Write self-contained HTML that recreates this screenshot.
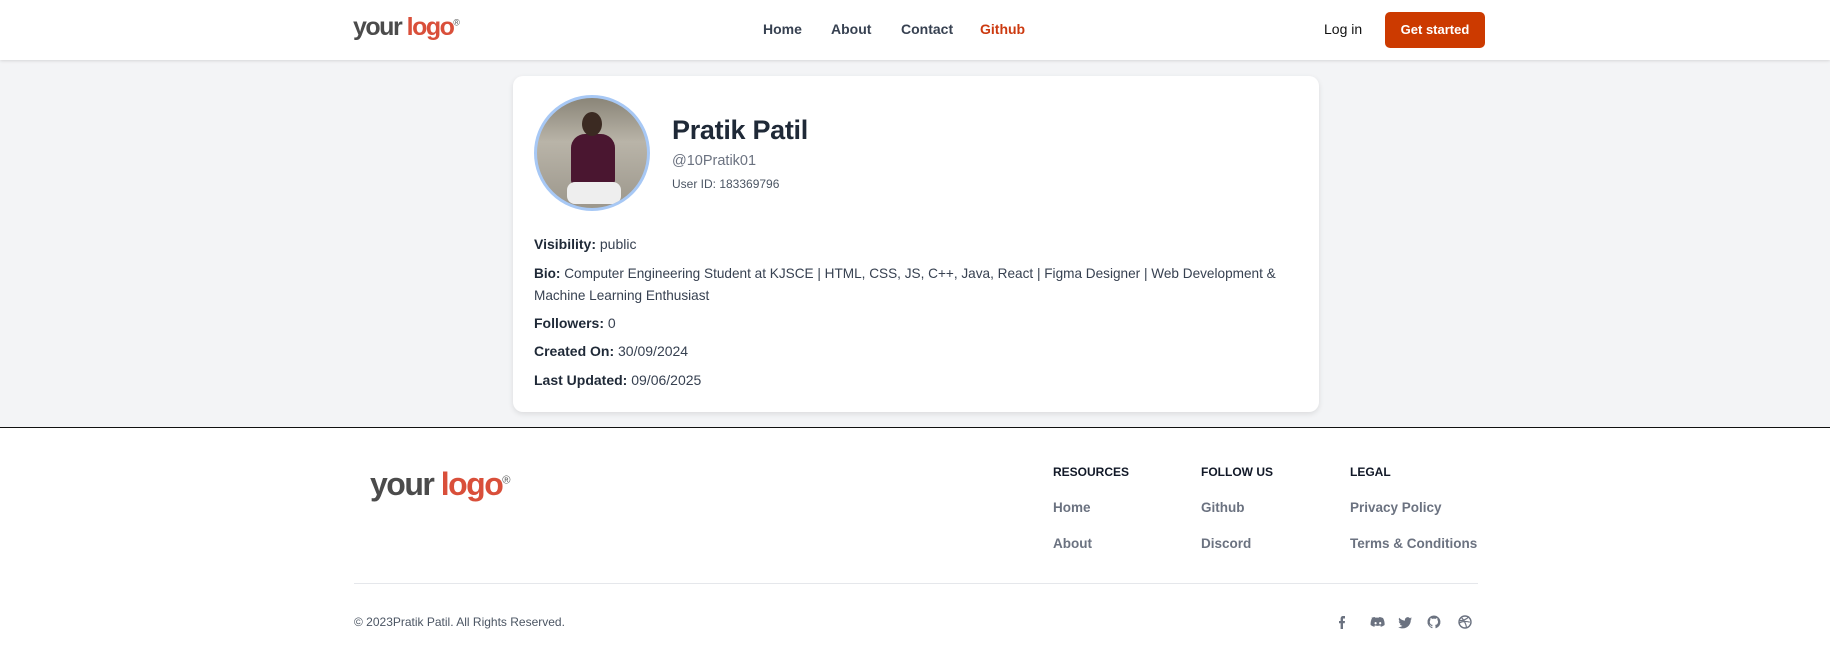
<!DOCTYPE html>
<html><head><meta charset="utf-8"><style>
*{margin:0;padding:0;box-sizing:border-box}
body{width:1830px;height:657px;background:#f3f4f6;font-family:"Liberation Sans",sans-serif;position:relative;overflow:hidden;color:#1f2937}
.a{position:absolute;white-space:nowrap}
header{position:absolute;left:0;top:0;width:1830px;height:60px;background:#fff;box-shadow:0 1px 3px rgba(0,0,0,.12)}
.logo{font-weight:bold;letter-spacing:-1.5px}
.logo .y{color:#4b4b4b}.logo .l{color:#d94f3a}
.logo sup{font-size:.35em;color:#555;font-weight:normal}
.nav{font-size:14px;font-weight:bold;color:#374151;top:21px}
.card{position:absolute;left:513px;top:76px;width:806px;height:336px;background:#fff;border-radius:10px;box-shadow:0 2px 6px rgba(0,0,0,.1)}
.row{font-size:14px;color:#374151}
.row b{color:#1f2937}
footer{position:absolute;left:0;top:427px;width:1830px;height:230px;background:#fff;border-top:1.5px solid #111}
.h{font-size:12px;font-weight:bold;color:#111827;top:37px}
.lk{font-size:13.5px;color:#6b7280;font-weight:bold}
</style></head><body>
<header>
<div class="a logo" style="left:353px;top:13px;font-size:25px"><span class="y">your</span> <span class="l">logo</span><sup>®</sup></div>
<div class="a nav" style="left:763px">Home</div>
<div class="a nav" style="left:831px">About</div>
<div class="a nav" style="left:901px">Contact</div>
<div class="a nav" style="left:980px;color:#cc3a10">Github</div>
<div class="a nav" style="left:1324px;color:#111;font-weight:normal">Log in</div>
<div class="a" style="left:1385px;top:12px;width:100px;height:36px;background:#cc3a00;border-radius:5px;color:#fff;font-size:13px;font-weight:bold;text-align:center;line-height:36px">Get started</div>
</header>
<div class="card">
<div class="a" style="left:21px;top:19px;width:116px;height:116px;border-radius:50%;border:3px solid #a7c8f5;overflow:hidden;background:linear-gradient(#8a8578,#b9b4a8 40%,#9c978c)">
<div class="a" style="left:34px;top:36px;width:44px;height:52px;background:#4a1630;border-radius:14px 14px 6px 6px"></div>
<div class="a" style="left:45px;top:14px;width:20px;height:24px;background:#3b2a22;border-radius:50%"></div>
<div class="a" style="left:30px;top:84px;width:54px;height:22px;background:#eee;border-radius:8px"></div>
</div>
<div class="a" style="left:159px;top:39px;font-size:27px;font-weight:bold;color:#1f2937;letter-spacing:-.3px">Pratik Patil</div>
<div class="a" style="left:159px;top:77px;font-size:14.5px;color:#6b7280">@10Pratik01</div>
<div class="a" style="left:159px;top:101px;font-size:12px;color:#4b5563">User ID: 183369796</div>
<div class="a row" style="left:21px;top:160px"><b>Visibility:</b> public</div>
<div class="a row" style="left:21px;top:187px;line-height:22px;white-space:normal;width:770px;font-size:13.6px"><b>Bio:</b> Computer Engineering Student at KJSCE | HTML, CSS, JS, C++, Java, React | Figma Designer | Web Development &amp; Machine Learning Enthusiast</div>
<div class="a row" style="left:21px;top:239px"><b>Followers:</b> 0</div>
<div class="a row" style="left:21px;top:267px"><b>Created On:</b> 30/09/2024</div>
<div class="a row" style="left:21px;top:296px"><b>Last Updated:</b> 09/06/2025</div>
</div>
<footer>
<div class="a logo" style="left:370px;top:38px;font-size:32px"><span class="y">your</span> <span class="l">logo</span><sup>®</sup></div>
<div class="a h" style="left:1053px">RESOURCES</div>
<div class="a h" style="left:1201px">FOLLOW US</div>
<div class="a h" style="left:1350px">LEGAL</div>
<div class="a lk" style="left:1053px;top:72px">Home</div>
<div class="a lk" style="left:1053px;top:108px">About</div>
<div class="a lk" style="left:1201px;top:72px">Github</div>
<div class="a lk" style="left:1201px;top:108px">Discord</div>
<div class="a lk" style="left:1350px;top:72px">Privacy Policy</div>
<div class="a lk" style="left:1350px;top:108px">Terms &amp; Conditions</div>
<div class="a" style="left:354px;top:155px;width:1124px;height:1px;background:#e5e7eb"></div>
<div class="a" style="left:354px;top:187px;font-size:12px;color:#4b5563">© 2023Pratik Patil. All Rights Reserved.</div>
<svg class="a" style="left:1334px;top:186px" width="145" height="16" viewBox="0 0 145 16" fill="#6b7280">
<path d="M9 2h2v2.5H9.5c-.5 0-.5.3-.5.8V7h2l-.3 2.3H9V15H6.6V9.3H5V7h1.6V5C6.6 3 7.5 2 9 2z"/>
<path d="M37 4c1.5-.7 3-.9 4-.9l.4.7c1-.2 2.2-.2 3.2 0l.4-.7c1 0 2.5.2 4 .9 1.2 2 1.8 4.5 1.6 7-1.3 1-2.6 1.5-3.700 1.8l-.7-1.1c.6-.2 1-.4 1.4-.7-2.5 1.1-5.5 1.1-8 0 .4.3.8.5 1.4.7l-.7 1.1c-1.1-.3-2.4-.8-3.7-1.8-.2-2.5.4-5 1.4-7zm3.5 5.2a1.1 1.2 0 1 0 2.2 0 1.1 1.2 0 1 0-2.2 0zm4.6 0a1.1 1.2 0 1 0 2.2 0 1.1 1.2 0 1 0-2.2 0z"/>
<path d="M78 4.5c-.5.2-1 .4-1.6.4.6-.3 1-.9 1.2-1.5-.5.3-1.1.6-1.8.7a2.8 2.8 0 0 0-4.8 2.5c-2.3-.1-4.4-1.2-5.8-2.9-.8 1.3-.3 2.9.9 3.7-.5 0-.9-.1-1.3-.3 0 1.4 1 2.6 2.3 2.8-.4.1-.9.1-1.3 0 .4 1.1 1.4 1.9 2.6 2-1.2.9-2.7 1.4-4.2 1.2 1.3.8 2.8 1.3 4.4 1.3 5.4 0 8.4-4.6 8.2-8.7.5-.4 1-.8 1.2-1.200z"/>
<path d="M100 1.5a6.5 6.5 0 0 0-2 12.7c.3 0 .4-.1.4-.3v-1.2c-1.8.4-2.2-.8-2.2-.8-.3-.7-.7-.9-.7-.9-.6-.4 0-.4 0-.4.6 0 1 .7 1 .7.6 1 1.5.7 1.9.5 0-.4.2-.7.4-.9-1.4-.2-3-.7-3-3.2 0-.7.3-1.3.7-1.8-.1-.2-.3-.8 0-1.7 0 0 .6-.2 1.8.7a6 6 0 0 1 3.2 0c1.2-.9 1.8-.7 1.8-.7.3.9.1 1.5 0 1.7.4.5.7 1.1.7 1.8 0 2.5-1.5 3-3 3.2.3.2.5.6.5 1.2v1.8c0 .2.1.3.4.3A6.5 6.5 0 0 0 100 1.5z"/>
<circle cx="131" cy="8" r="6" fill="none" stroke="#6b7280" stroke-width="1.4"/>
<path d="M125.5 6.5c3 .5 7-1 9.5-4M127 3c3 3 5 7 5.5 10.5M125.3 9c2.5-1.5 6.5-2 10.5-.8" fill="none" stroke="#6b7280" stroke-width="1.2"/>
</svg>
</footer>
</body></html>
